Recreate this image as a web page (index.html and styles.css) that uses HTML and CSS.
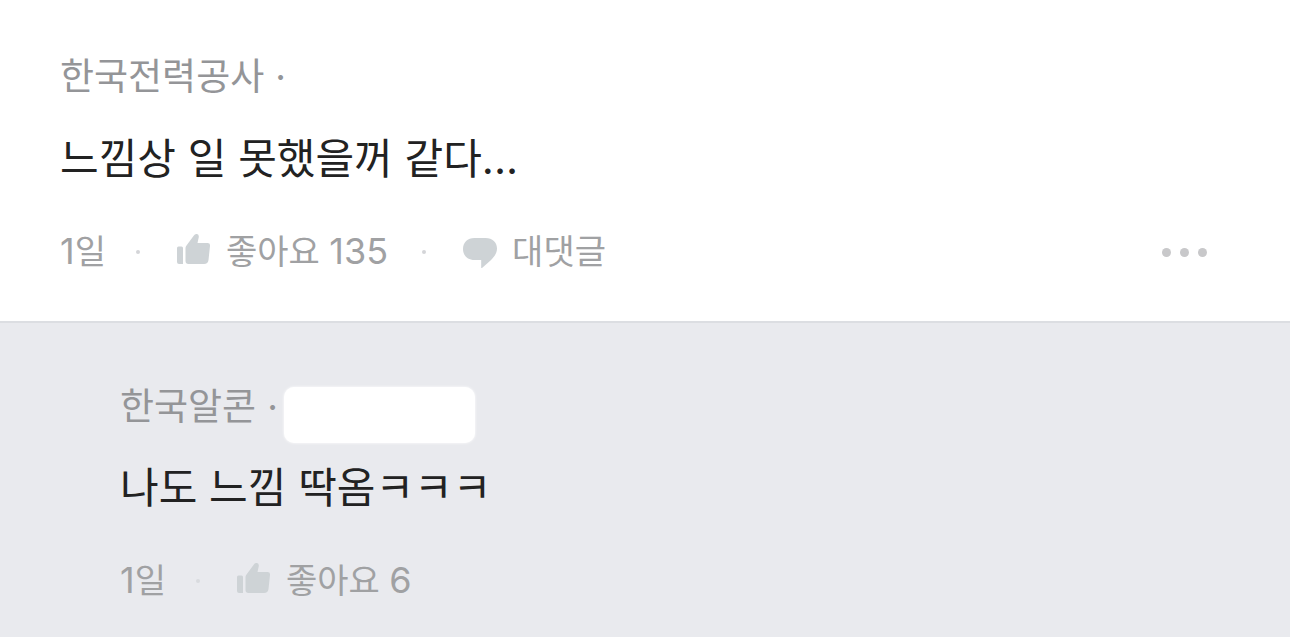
FILE: index.html
```html
<!DOCTYPE html>
<html lang="ko">
<head>
<meta charset="utf-8">
<meta name="viewport" content="width=device-width, initial-scale=1">
<title>댓글</title>
<link rel="stylesheet" href="styles.css">
</head>
<body>
<svg class="sprite" aria-hidden="true">
  <symbol id="thumb" viewBox="0 0 34 36"><path d="M1.500 14.500H4.500Q6 14.500 6 16V32H2Q0 32 0 30V16Q0 14.500 1.500 14.500ZM8.500 16Q8.500 14.500 9.500 13.500L16.500 4Q18 1.500 20 2Q22 2.500 21.800 5L20.500 11H30.500Q33.500 11 33 14L31.500 28Q31 32 27 32H11.500Q8.500 32 8.500 29Z"/></symbol>
  <symbol id="bubble" viewBox="0 0 34 36"><path d="M11.500 6H22.500C29.500 6 34 10.500 34 16.500C34 21.500 31 25 27.500 28.500L19 36Q18.200 36.500 18.200 35.500V28H11.500C4.500 28 0 23.500 0 17S4.500 6 11.500 6Z"/></symbol>
</svg>
<main class="thread">
  <article class="comment">
    <header class="author"><a class="company" href="#">한국전력공사</a><span class="separator">·</span></header>
    <p class="body">느낌상 일 못했을꺼 같다...</p>
    <footer class="meta">
      <time class="age"><span class="number">1</span>일</time><span class="dot"></span>
      <button class="action" type="button"><svg class="icon" aria-hidden="true"><use href="#thumb"/></svg><span>좋아요 <span class="number">135</span></span></button><span class="dot"></span>
      <button class="action" type="button"><svg class="icon" aria-hidden="true"><use href="#bubble"/></svg><span>대댓글</span></button>
      <button class="more" type="button" aria-label="더보기"><i></i><i></i><i></i></button>
    </footer>
  </article>
  <article class="comment reply">
    <header class="author"><a class="company" href="#">한국알콘</a><span class="separator">·</span><span class="mask"></span></header>
    <p class="body">나도 느낌 딱옴ㅋㅋㅋ</p>
    <footer class="meta">
      <time class="age"><span class="number">1</span>일</time><span class="dot"></span>
      <button class="action" type="button"><svg class="icon" aria-hidden="true"><use href="#thumb"/></svg><span>좋아요 <span class="number">6</span></span></button>
    </footer>
  </article>
</main>
</body>
</html>
```
FILE: styles.css
```css
* { box-sizing: border-box; }
body { margin: 0; background: #e9eaee; font-family: Inter, "Noto Sans CJK KR", sans-serif; }
.sprite { position: absolute; width: 0; height: 0; }
.comment { padding: 53px 83px 45px 60px; background: #fff; border-bottom: 2px solid #dcdee2; }
.reply { padding-top: 60px; padding-left: 120px; padding-bottom: 30px; background: #e9eaee; border: 0; }
.author { display: flex; height: 48px; line-height: 48px; font-size: 37px; color: #949598; }
.company { color: inherit; text-decoration: none; }
.separator { margin-left: 11px; }
.body { margin: 28px 0 39px; font-size: 42px; line-height: 60px; color: #222; }
.reply .body { margin-top: 27px; }
.meta { display: flex; align-items: center; height: 48px; font-size: 34px; line-height: 48px; color: #a0a1a3; }
.number { font-size: 36px; line-height: 1; }
.dot { flex: none; width: 4px; height: 4px; margin: 0 37px 0 30px; border-radius: 50%; background: #d4d5d8; }
.reply .dot { background: #d9dbde; }
.action { display: flex; align-items: center; gap: 15px; padding: 0; border: 0; background: none; color: inherit; font: inherit; white-space: nowrap; cursor: pointer; }
.action + .dot { margin-left: 34px; }
.icon { flex: none; width: 34px; height: 36px; margin-bottom: 4px; fill: #ced3d6; }
.more { display: flex; gap: 9px; margin-left: auto; padding: 0; border: 0; background: none; cursor: pointer; }
.more i { width: 9px; height: 9px; border-radius: 50%; background: #c8c8ca; }
.mask { width: 191px; height: 56px; margin: 4px 0 0 6px; border-radius: 10px; background: #fff; box-shadow: 0 0 3px #fff; }
```
